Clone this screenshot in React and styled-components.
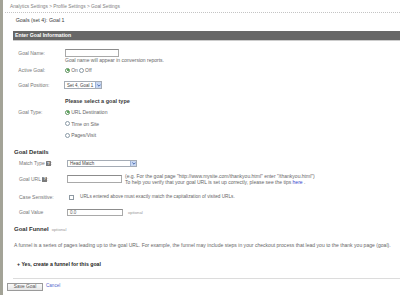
import React from 'react';
import styled, { createGlobalStyle } from 'styled-components';

const GlobalStyle = createGlobalStyle`
  html, body { margin: 0; padding: 0; background: #fff; }
  body { font-family: "Liberation Sans", Arial, sans-serif; color: #666; }
  * { box-sizing: border-box; }
`;

const Page = styled.div`
  width: 400px;
  min-height: 295px;
  border-left: 3px solid #a3a397;
  overflow: hidden;
`;

const Breadcrumb = styled.div`
  margin-left: 2px;
  padding: 1px 0 0 5px;
  height: 13px;
  line-height: 11px;
  font-size: 4.8px;
  color: #808080;
  border-bottom: 1px dotted #c4c4c4;
`;

const Main = styled.div`
  margin-left: 10px;
`;

const Title = styled.div`
  height: 14px;
  line-height: 14px;
  padding-left: 2.7px;
  font-size: 5.3px;
  color: #3a3a3a;
`;

const Bar = styled.div`
  margin-top: 4px;
  height: 10px;
  line-height: 9px;
  padding-left: 2px;
  background: #676767;
  border-bottom: 1px solid #ccc;
  color: #fff;
  font-weight: bold;
  font-size: 5.2px;
`;

const Row = styled.div`
  display: grid;
  grid-template-columns: ${p => p.$col}px 1fr;
  align-items: ${p => p.$align || 'start'};
  padding-top: ${p => p.$pt}px;
`;

const Label = styled.div`
  padding-left: ${p => p.$pl || 5.3}px;
  line-height: ${p => p.$lh}px;
  font-size: 5px;
  color: #777;
  white-space: nowrap;
  display: flex;
  align-items: center;
`;

const Field = styled.div`
  display: flex;
  flex-direction: ${p => (p.$column ? 'column' : 'row')};
  align-items: ${p => (p.$column ? 'flex-start' : 'center')};
  gap: ${p => p.$gap || 0}px;
`;

const Input = styled.div`
  width: ${p => p.$w}px;
  height: ${p => p.$h}px;
  border: 1px solid #a9a9a9;
  border-top-color: #8c8c8c;
  background: #fff;
  font-size: 4.5px;
  line-height: ${p => p.$h - 2}px;
  padding-left: 2px;
  color: #666;
`;

const Helper = styled.div`
  font-size: ${p => p.$size || 5}px;
  line-height: ${p => p.$lh || 6}px;
  color: #666;
  white-space: nowrap;
`;

const SelectBox = styled.div`
  width: ${p => p.$w}px;
  height: ${p => p.$h}px;
  border: 1px solid #a5acb5;
  background: #fff;
  display: flex;
  font-size: 4.5px;
  color: #444;
`;

const SelectText = styled.span`
  flex: 1;
  padding-left: 2px;
  display: flex;
  align-items: center;
`;

const SelectArrow = styled.span`
  width: 6px;
  background: #c9d8f2;
  border-left: 1px solid #9fb3d6;
  display: flex;
  align-items: center;
  justify-content: center;
`;

const RadioDot = styled.span`
  width: 5px;
  height: 5px;
  border-radius: 50%;
  border: 1px solid ${p => (p.$on ? '#5c8f5c' : '#8a9aa6')};
  background: #fff;
  display: inline-flex;
  align-items: center;
  justify-content: center;
  margin-right: 1.2px;
  &::after {
    content: '';
    width: 2px;
    height: 2px;
    border-radius: 50%;
    background: ${p => (p.$on ? '#2f8f2f' : 'transparent')};
  }
`;

const OptionText = styled.span`
  font-size: 5px;
  color: #666;
  margin-right: ${p => p.$mr || 0}px;
`;

const Option = styled.div`
  height: 8px;
  display: flex;
  align-items: center;
`;

const Prompt = styled.div`
  line-height: 8px;
  font-size: 5.5px;
  font-weight: bold;
  color: #3a3a3a;
`;

const Heading = styled.div`
  padding-top: ${p => p.$pt}px;
  padding-left: 1px;
  line-height: 8px;
  font-size: 6px;
  font-weight: bold;
  color: #333;
  display: flex;
  align-items: baseline;
  gap: 3px;
`;

const Optional = styled.span`
  font-size: 4.2px;
  font-weight: normal;
  color: #999;
`;

const HelpIcon = styled.span`
  display: inline-flex;
  align-items: center;
  justify-content: center;
  width: 4.5px;
  height: 5px;
  margin-left: 1.5px;
  background: #7a7a7a;
  color: #fff;
  font-size: 4px;
  font-weight: bold;
  border-radius: 0.5px;
`;

const CheckBox = styled.span`
  width: 5px;
  height: 5px;
  margin-left: 2px;
  border: 1px solid #8f9aa3;
  background: #fff;
`;

const Link = styled.span`
  color: #3344cc;
`;

const Paragraph = styled.div`
  padding-top: ${p => p.$pt}px;
  padding-left: ${p => p.$pl || 1}px;
  line-height: ${p => p.$lh}px;
  font-size: ${p => p.$size || 5}px;
  letter-spacing: ${p => p.$ls || 0}px;
  font-weight: ${p => (p.$bold ? 'bold' : 'normal')};
  color: ${p => (p.$bold ? '#222' : '#666')};
  white-space: nowrap;
`;

const Divider = styled.div`
  margin-top: 9.7px;
  border-top: 1px solid #dcdcdc;
`;

const Footer = styled.div`
  margin: 4px 0 0 4px;
  display: flex;
  align-items: center;
  gap: 3px;
`;

const Button = styled.div`
  width: 36px;
  height: 8px;
  border: 1px solid #9a9a9a;
  background: linear-gradient(#fafafa, #e6e6e6);
  font-size: 4.8px;
  color: #555;
  display: flex;
  align-items: center;
  justify-content: center;
`;

const CancelLink = styled.span`
  font-size: 4.6px;
  color: #5566cc;
  margin-top: -3px;
`;

const Chevron = () => (
  <svg width="4" height="3" viewBox="0 0 4 3">
    <path d="M0.4 0.6 L2 2.2 L3.6 0.6" fill="none" stroke="#3b5fa8" strokeWidth="0.9" />
  </svg>
);

const Select = ({ w, h, children }) => (
  <SelectBox $w={w} $h={h}>
    <SelectText>{children}</SelectText>
    <SelectArrow><Chevron /></SelectArrow>
  </SelectBox>
);

export default function App() {
  return (
    <Page>
      <GlobalStyle />
      <Breadcrumb>Analytics Settings &gt; Profile Settings &gt; Goal Settings</Breadcrumb>
      <Main>
        <Title>Goals (set 4): Goal 1</Title>
        <Bar>Enter Goal Information</Bar>

        <Row $col={52} $pt={8}>
          <Label $lh={8}>Goal Name:</Label>
          <Field $column>
            <Input $w={54} $h={8} />
            <Helper>Goal name will appear in conversion reports.</Helper>
          </Field>
        </Row>

        <Row $col={52} $pt={3}>
          <Label $lh={8}>Active Goal:</Label>
          <Field style={{ height: 8 }}>
            <RadioDot $on />
            <OptionText $mr={1}>On</OptionText>
            <RadioDot />
            <OptionText>Off</OptionText>
          </Field>
        </Row>

        <Row $col={51} $pt={7}>
          <Label $lh={8}>Goal Position:</Label>
          <Field>
            <Select w={38} h={8}>Set 4, Goal 1</Select>
          </Field>
        </Row>

        <Row $col={52} $pt={8}>
          <Label $lh={8} />
          <Prompt>Please select a goal type</Prompt>
        </Row>

        <Row $col={52} $pt={3}>
          <Label $lh={8}>Goal Type:</Label>
          <Field $column $gap={3.7}>
            <Option><RadioDot $on /><OptionText>URL Destination</OptionText></Option>
            <Option><RadioDot /><OptionText>Time on Site</OptionText></Option>
            <Option><RadioDot /><OptionText>Pages/Visit</OptionText></Option>
          </Field>
        </Row>

        <Heading $pt={9}>Goal Details</Heading>

        <Row $col={54} $pt={3.6}>
          <Label $lh={7} $pl={6}>Match Type<HelpIcon>?</HelpIcon>:</Label>
          <Field>
            <Select w={70} h={7}>Head Match</Select>
          </Field>
        </Row>

        <Row $col={54} $pt={6.5} $align="center">
          <Label $lh={8} $pl={6}>Goal URL<HelpIcon>?</HelpIcon>:</Label>
          <Field $gap={3}>
            <Input $w={55} $h={8} />
            <div>
              <Helper>(e.g. For the goal page "http://www.mysite.com/thankyou.html" enter "/thankyou.html")</Helper>
              <Helper>To help you verify that your goal URL is set up correctly, please see the tips <Link>here</Link> .</Helper>
            </div>
          </Field>
        </Row>

        <Row $col={54} $pt={7.8}>
          <Label $lh={8} $pl={6}>Case Sensitive:</Label>
          <Field $gap={6} style={{ height: 8 }}>
            <CheckBox />
            <Helper $lh={8} $size={4.7}>URLs entered above must exactly match the capitalization of visited URLs.</Helper>
          </Field>
        </Row>

        <Row $col={54} $pt={7.5}>
          <Label $lh={7} $pl={6}>Goal Value</Label>
          <Field $gap={5}>
            <Input $w={56} $h={7}>0.0</Input>
            <Optional>optional</Optional>
          </Field>
        </Row>

        <Heading $pt={9.5}>Goal Funnel <Optional>optional</Optional></Heading>

        <Paragraph $pt={8.2} $lh={6} $ls={0.03}>
          A funnel is a series of pages leading up to the goal URL. For example, the funnel may include steps in your checkout process that lead you to the thank you page (goal).
        </Paragraph>

        <Paragraph $pt={11.5} $lh={8} $pl={4} $size={5.2} $bold>
          + Yes, create a funnel for this goal
        </Paragraph>

        <Divider />
      </Main>
      <Footer>
        <Button>Save Goal</Button>
        <CancelLink>Cancel</CancelLink>
      </Footer>
    </Page>
  );
}
